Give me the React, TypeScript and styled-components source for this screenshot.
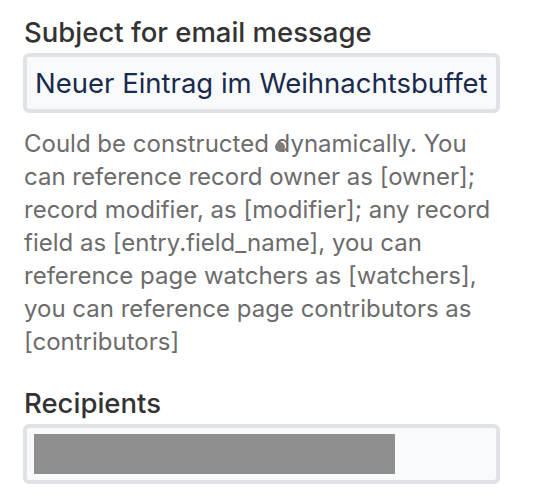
import React from "react";
import styled, { createGlobalStyle } from "styled-components";

const Global = createGlobalStyle`
  html, body { margin: 0; padding: 0; background: #ffffff; }
  body { font-family: Inter, "Noto Sans", "Liberation Sans", sans-serif; }
`;

const Form = styled.div`
  display: flex;
  flex-direction: column;
  padding: 14px 0 0 23px;
  width: 477px;
`;

const Field = styled.div<{ top?: number }>`
  display: flex;
  flex-direction: column;
  margin-top: ${(p) => p.top ?? 0}px;
`;

const Label = styled.label`
  font-size: 27.5px;
  font-weight: 500;
  color: #333333;
  line-height: 36px;
  margin-bottom: 3px;
  padding-left: 1px;
`;

const InputBox = styled.div`
  box-sizing: border-box;
  height: 60px;
  border: 4px solid #e1e2e6;
  border-radius: 6px;
  background: #f9fafc;
  display: flex;
  align-items: center;
  padding: 0 8px;
  color: #1a2a4c;
  font-size: 27.5px;
  white-space: nowrap;
  overflow: hidden;
`;

const Help = styled.div`
  position: relative;
  margin-top: 14px;
  font-size: 24px;
  line-height: 33px;
  color: #6c6c6c;
  padding-left: 1px;
`;

const Cursor = styled.span`
  position: absolute;
  left: 252px;
  top: 15px;
  width: 10px;
  height: 10px;
  border-radius: 50%;
  background: #7d7d7d;
`;

const Redacted = styled.div`
  width: 361px;
  height: 40px;
  background: #8f8f8f;
  margin-left: -1px;
`;

export default function App() {
  return (
    <>
      <Global />
      <Form>
        <Field>
          <Label>Subject for email message</Label>
          <InputBox>Neuer Eintrag im Weihnachtsbuffet</InputBox>
        </Field>
        <Help>
          Could be constructed dynamically. You can reference record owner as
          [owner]; record modifier, as [modifier]; any record field as
          [entry.field_name], you can reference page watchers as [watchers],
          you can reference page contributors as [contributors]
          <Cursor />
        </Help>
        <Field top={27}>
          <Label>Recipients</Label>
          <InputBox>
            <Redacted />
          </InputBox>
        </Field>
      </Form>
    </>
  );
}
